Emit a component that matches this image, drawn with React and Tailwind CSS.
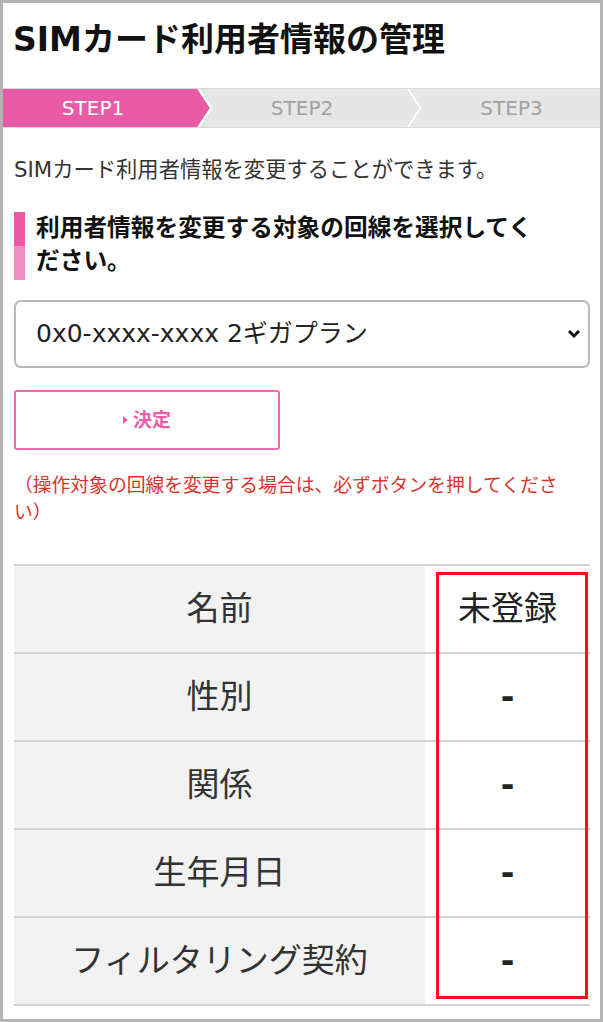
import React from 'react';

const rows = [
  { label: '名前', value: '未登録' },
  { label: '性別', value: '-' },
  { label: '関係', value: '-' },
  { label: '生年月日', value: '-' },
  { label: 'フィルタリング契約', value: '-' },
];

function StepBar() {
  return (
    <div className="flex h-[40px] mt-[26px] bg-[#e6e6e6] border-y border-[#d9d9d9] text-[20px]">
      {/* STEP1 active */}
      <div className="relative w-[194px] bg-[#ea5ba7] flex items-center justify-center pr-[14px] text-white">
        STEP1
        <svg className="absolute left-full top-0 h-full w-[16px] z-10" viewBox="0 0 16 38" preserveAspectRatio="none">
          <path d="M0 0 L13 19 L0 38 Z" fill="#ea5ba7" />
          <polyline points="1.2,-1 14.2,19 1.2,39" fill="none" stroke="#ffffff" strokeWidth="2" />
        </svg>
      </div>
      <div className="relative w-[210px] flex items-center justify-center text-[#a0a0a0]">
        STEP2
        <svg className="absolute left-full top-0 h-full w-[16px] z-10" viewBox="0 0 16 38" preserveAspectRatio="none">
          <polyline points="0.5,-1 13.5,19 0.5,39" fill="none" stroke="#ffffff" strokeWidth="2" />
        </svg>
      </div>
      <div className="flex-1 flex items-center justify-center pl-[16px] text-[#a0a0a0]">STEP3</div>
    </div>
  );
}

export default function App() {
  return (
    <div className="w-[603px] h-[1022px] overflow-hidden bg-white border-[3px] border-[#b4b4b4] font-['DejaVu_Sans','Noto_Sans_CJK_JP',sans-serif]">
      {/* Title */}
      <h1 className="pt-[15px] pl-[10px] text-[33px] leading-[44px] font-bold text-[#111]">
        SIMカード利用者情報の管理
      </h1>

      <StepBar />

      <div className="pl-[11px] pr-[10px]">
        <p className="mt-[27px] text-[21.3px] leading-[30px] text-[#333]">
          SIMカード利用者情報を変更することができます。
        </p>

        {/* Section heading */}
        <div className="mt-[27px] flex gap-[11px]">
          <div className="w-[11px] flex flex-col shrink-0">
            <div className="flex-1 bg-[#ec5aa6]" />
            <div className="flex-1 bg-[#f38ec4]" />
          </div>
          <h2 className="w-[510px] text-[23.7px] leading-[33px] font-bold text-[#111] pb-[2px]">
            利用者情報を変更する対象の回線を選択してください。
          </h2>
        </div>

        {/* Line select */}
        <div className="mt-[20px] h-[68px] flex items-center justify-between rounded-[7px] border-2 border-[#b9b9b9] pl-[20px] pr-[7px]">
          <span className="text-[25px] text-[#222]">0x0-xxxx-xxxx 2ギガプラン</span>
          <svg width="14" height="10" viewBox="0 0 14 10">
            <polyline points="2,2 7,7 12,2" fill="none" stroke="#111" strokeWidth="3" />
          </svg>
        </div>

        {/* Submit */}
        <button className="mt-[22px] w-[266px] h-[60px] flex items-center justify-center gap-[5px] rounded-[3px] border-2 border-[#ee6aae] bg-white text-[#ec5fa8] text-[19px] font-bold">
          <svg width="5" height="8" viewBox="0 0 5 8">
            <path d="M0 0 L5 4 L0 8 Z" fill="#ec5fa8" />
          </svg>
          決定
        </button>

        <p className="mt-[22px] w-[560px] text-[18.8px] leading-[27px] text-[#d9342b]">
          （操作対象の回線を変更する場合は、必ずボタンを押してください）
        </p>

        {/* Info table */}
        <div className="relative mt-[38px] border-b-2 border-[#d3d3d3]">
          {rows.map((row) => (
            <div key={row.label} className="flex h-[88px] border-t-2 border-[#d3d3d3] text-[33px] text-[#333]">
              <div className="w-[411px] bg-[#f2f2f2] flex items-center justify-center">{row.label}</div>
              <div className={`flex-1 flex items-center justify-center text-[#222] ${row.value === '-' ? 'font-bold' : ''}`}>
                {row.value}
              </div>
            </div>
          ))}
          {/* highlight frame */}
          <div className="absolute left-[422px] right-[2px] top-[8px] bottom-[5px] border-[3px] border-[#ff0a1e] pointer-events-none" />
        </div>
      </div>
    </div>
  );
}
